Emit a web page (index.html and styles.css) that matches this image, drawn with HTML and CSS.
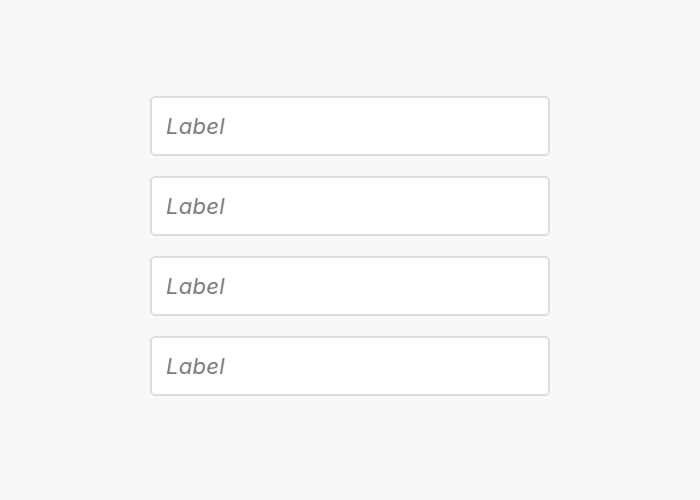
FILE: index.html
```html
<!DOCTYPE html>
<html>
<head>
<meta charset="utf-8">
<link rel="stylesheet" href="styles.css">
</head>
<body>
<div class="form">
  <div class="field"><span class="label">Label</span></div>
  <div class="field"><span class="label">Label</span></div>
  <div class="field"><span class="label">Label</span></div>
  <div class="field"><span class="label">Label</span></div>
</div>
</body>
</html>
```

FILE: styles.css
```css
html, body {
  margin: 0;
  padding: 0;
  background: #f8f8f8;
  width: 700px;
  height: 500px;
}
.form {
  padding-top: 96px;
  display: flex;
  flex-direction: column;
  align-items: center;
  gap: 20px;
}
.field {
  box-sizing: border-box;
  width: 400px;
  height: 60px;
  background: #fff;
  border: 2px solid #dddddd;
  border-radius: 5px;
  display: flex;
  align-items: center;
  padding-left: 14px;
}
.label {
  font-family: Inter, "Noto Sans", sans-serif;
  font-style: italic;
  font-weight: 400;
  font-size: 22px;
  color: #7d7d7d;
  line-height: 1;
  letter-spacing: 0.3px;
}
```
